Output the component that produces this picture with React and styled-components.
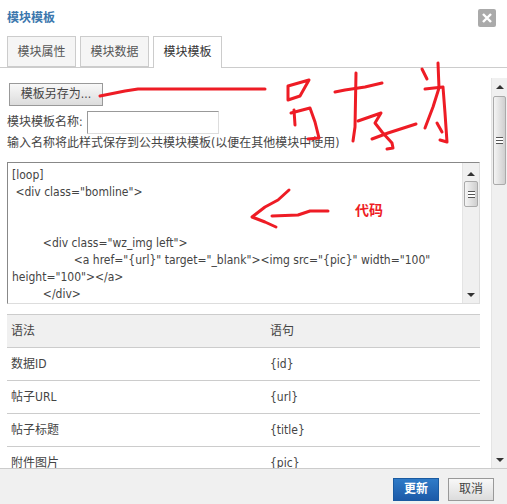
import React from 'react';
import styled, { createGlobalStyle } from 'styled-components';

const GlobalStyle = createGlobalStyle`
  html, body {
    margin: 0;
    padding: 0;
    background: #fff;
  }
  * {
    box-sizing: border-box;
  }
`;

const Dialog = styled.div`
  position: relative;
  width: 507px;
  height: 504px;
  display: flex;
  flex-direction: column;
  overflow: hidden;
  background: #fff;
  color: #444;
  font: 12px/17px "DejaVu Sans Condensed", "DejaVu Sans", "Noto Sans CJK SC", sans-serif;
`;

const Header = styled.div`
  flex: none;
  height: 36px;
  padding: 9px 11px 0 7px;
  display: flex;
  justify-content: space-between;
  align-items: flex-start;
`;

const Title = styled.h3`
  margin: 0;
  font-size: 12px;
  line-height: 18px;
  font-weight: 700;
  color: #3a76ad;
`;

const CloseButton = styled.button`
  width: 18px;
  height: 18px;
  padding: 0;
  border: 0;
  border-radius: 2px;
  background: #aaa;
  display: flex;
  align-items: center;
  justify-content: center;
`;

const Tabs = styled.div`
  flex: none;
  height: 32px;
  padding-left: 7px;
  display: flex;
  gap: 4px;
  border-bottom: 1px solid #ccc;
`;

const Tab = styled.div`
  width: 69px;
  height: ${p => (p.$active ? '32px' : '31px')};
  border: 1px solid #ccc;
  border-bottom: ${p => (p.$active ? '0' : '1px solid #ccc')};
  background: ${p => (p.$active ? '#fff' : '#f5f5f5')};
  color: ${p => (p.$active ? '#333' : '#555')};
  text-align: center;
  line-height: 30px;
`;

const Main = styled.div`
  flex: none;
  height: 400px;
  display: flex;
`;

const Content = styled.div`
  width: 480px;
  margin-left: 7px;
  margin-right: 4px;
  height: 400px;
  overflow: hidden;
`;

const SaveAsButton = styled.button`
  display: block;
  width: 94px;
  height: 23px;
  margin: 15px 0 5px 2px;
  padding: 0;
  border: 1px solid #999;
  background: linear-gradient(#f8f8f8, #dcdcdc);
  color: #444;
  font: inherit;
`;

const NameRow = styled.div`
  display: flex;
  align-items: center;
  gap: 4px;
`;

const NameInput = styled.input`
  width: 132px;
  height: 23px;
  padding: 0;
  background: #fff;
  border: 1px solid #ddd;
  border-top-color: #999;
  border-left-color: #999;
`;

const Hint = styled.div`
  margin-top: 1px;
`;

const CodeBox = styled.div`
  width: 473px;
  height: 142px;
  margin-top: 10px;
  display: flex;
  border: 1px solid #ddd;
  border-top-color: #888;
  border-left-color: #888;
`;

const Code = styled.div`
  flex: 1;
  min-width: 0;
  padding: 4px 4px 0;
  white-space: pre-wrap;
  overflow: hidden;
`;

const ScrollTrack = styled.div`
  flex: none;
  display: flex;
  flex-direction: column;
  align-items: center;
  justify-content: space-between;
  width: ${p => p.$width}px;
  margin-top: ${p => p.$offset}px;
  background: #f0f0f0;
  border-left: 1px solid #e4e4e4;
`;

const ScrollThumb = styled.div`
  width: calc(100% - 2px);
  height: ${p => p.$height}px;
  border: 1px solid #aaa;
  border-radius: 2px;
  background: linear-gradient(90deg, #f4f4f4, #cfcfcf);
  display: flex;
  align-items: center;
  justify-content: center;
`;

const ScrollTop = styled.div`
  display: flex;
  flex-direction: column;
  align-items: center;
  width: 100%;
`;

const ArrowUp = styled.div`
  width: 0;
  height: 0;
  margin: ${p => p.$margin};
  border-left: 4px solid transparent;
  border-right: 4px solid transparent;
  border-bottom: 4px solid #333;
`;

const ArrowDown = styled(ArrowUp)`
  border-bottom: 0;
  border-top: 4px solid #333;
`;

const Grip = styled.div`
  width: 7px;
  height: 7px;
  border-top: 1px solid #555;
  border-bottom: 1px solid #555;
  background: linear-gradient(#fff 0 2px, #555 2px 3px, #fff 3px);
`;

const Table = styled.div`
  width: 473px;
  margin-top: 10px;
  border-top: 1px solid #ccc;
`;

const Row = styled.div`
  height: 33px;
  display: grid;
  grid-template-columns: 259px 1fr;
  align-items: center;
  padding: 1px 0 0 4px;
  border-bottom: 1px solid #ccc;
  background: ${p => (p.$head ? '#f0f0f0' : '#fff')};
`;

const Footer = styled.div`
  flex: none;
  height: 36px;
  padding: 9px 13px 0 0;
  display: flex;
  justify-content: flex-end;
  gap: 9px;
  background: #f0f0f0;
  border-top: 1px solid #ccc;
`;

const FooterButton = styled.button`
  width: 46px;
  height: 23px;
  padding: 0;
  font: inherit;
  font-weight: ${p => (p.$primary ? 700 : 400)};
  color: ${p => (p.$primary ? '#fff' : '#444')};
  border: 1px solid ${p => (p.$primary ? '#1a5aa0' : '#999')};
  background: ${p => (p.$primary ? 'linear-gradient(#2f7bc8, #1c5aa8)' : 'linear-gradient(#f8f8f8, #dcdcdc)')};
`;

const Scribbles = styled.svg`
  position: absolute;
  left: 0;
  top: 0;
  pointer-events: none;
`;

const CodeLabel = styled.div`
  position: absolute;
  left: 355px;
  top: 201px;
  color: #ee1c25;
  font-size: 14px;
  line-height: 18px;
  font-weight: 700;
`;

const strokes = [
  'M100 96 L125 91 L138 89 L265 89',
  'M309 80 L288 86 L288 100 L300 96 L309 80',
  'M291 113 L310 108 L315 122 L319 138 L308 139',
  'M294 110 L295 125',
  'M335 92 L345 90 L365 87 L382 83',
  'M356 73 L355 127 L353 141',
  'M358 121 L381 113 L375 123 L382 132 L392 143 L393 148 L387 149',
  'M372 139 L388 133 L416 124',
  'M422 69 L427 79',
  'M438 63 L439 88 L433 107 L425 128',
  'M425 89 L443 87 L445 113 L447 142 L440 140',
  'M437 123 L442 132',
  'M289 190 L278 200 L265 207 L252 217 L265 222 L276 227',
  'M272 216 L298 215 L310 211 L328 211',
];

const code = `[loop]
 <div class="bomline">


         <div class="wz_img left">
                  <a href="{url}" target="_blank"><img src="{pic}" width="100" height="100"></a>
         </div>`;

const rows = [
  ['数据ID', '{id}'],
  ['帖子URL', '{url}'],
  ['帖子标题', '{title}'],
  ['附件图片', '{pic}'],
];

const Scrollbar = ({ width, offset, top, thumb, bottom }) => (
  <ScrollTrack $width={width} $offset={offset}>
    <ScrollTop>
      <ArrowUp $margin={top} />
      <ScrollThumb $height={thumb}>
        <Grip />
      </ScrollThumb>
    </ScrollTop>
    <ArrowDown $margin={bottom} />
  </ScrollTrack>
);

const App = () => (
  <>
    <GlobalStyle />
    <Dialog>
      <Header>
        <Title>模块模板</Title>
        <CloseButton aria-label="关闭">
          <svg width="10" height="10" viewBox="0 0 10 10">
            <path d="M1 1 L9 9 M9 1 L1 9" stroke="#fff" strokeWidth="2.4" />
          </svg>
        </CloseButton>
      </Header>
      <Tabs>
        <Tab>模块属性</Tab>
        <Tab>模块数据</Tab>
        <Tab $active>模块模板</Tab>
      </Tabs>
      <Main>
        <Content>
          <SaveAsButton>模板另存为...</SaveAsButton>
          <NameRow>
            模块模板名称:
            <NameInput />
          </NameRow>
          <Hint>输入名称将此样式保存到公共模块模板(以便在其他模块中使用)</Hint>
          <CodeBox>
            <Code>{code}</Code>
            <Scrollbar width={17} offset={0} top="9px 0 5px" thumb={26} bottom="0 0 6px" />
          </CodeBox>
          <Table>
            <Row $head>
              <span>语法</span>
              <span>语句</span>
            </Row>
            {rows.map(([name, value]) => (
              <Row key={value}>
                <span>{name}</span>
                <span>{value}</span>
              </Row>
            ))}
          </Table>
        </Content>
        <Scrollbar width={16} offset={10} top="7px 0 7px" thumb={89} bottom="0 0 6px" />
      </Main>
      <Footer>
        <FooterButton $primary>更新</FooterButton>
        <FooterButton>取消</FooterButton>
      </Footer>
      <Scribbles width="507" height="504" fill="none" stroke="#ee1c25" strokeWidth="3" strokeLinecap="round" strokeLinejoin="round">
        {strokes.map(d => (
          <path key={d} d={d} />
        ))}
      </Scribbles>
      <CodeLabel>代码</CodeLabel>
    </Dialog>
  </>
);

export default App;
